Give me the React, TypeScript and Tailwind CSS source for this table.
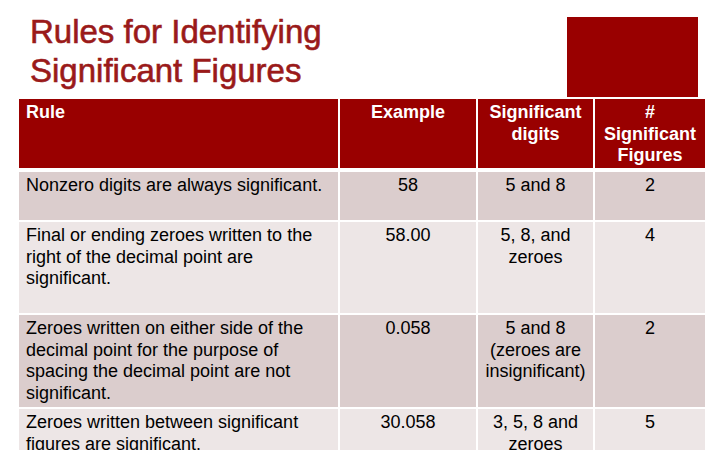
import React from "react";

const rows = [
    {
        rule: "Nonzero digits are always significant.",
        example: "58",
        digits: "5 and 8",
        count: "2",
        h: "h-[48px]",
        bg: "bg-[#dbcdcd]",
    },
    {
        rule: "Final or ending zeroes written to the right of the decimal point are significant.",
        example: "58.00",
        digits: "5, 8, and zeroes",
        count: "4",
        h: "h-[91px]",
        bg: "bg-[#ede6e6]",
    },
    {
        rule: "Zeroes written on either side of the decimal point for the purpose of spacing the decimal point are not significant.",
        example: "0.058",
        digits: "5 and 8 (zeroes are insignificant)",
        count: "2",
        h: "h-[92px]",
        bg: "bg-[#dbcdcd]",
    },
    {
        rule: "Zeroes written between significant figures are significant.",
        example: "30.058",
        digits: "3, 5, 8 and zeroes",
        count: "5",
        h: "h-[80px]",
        bg: "bg-[#ede6e6]",
    },
];

const App = () => {
    return (
        <div className="w-[720px] h-[450px] overflow-hidden bg-white font-['Liberation_Sans',Arial,sans-serif]">
            <div className="flex justify-between h-[99px]">
                <h1 className="pl-[30px] pt-[12px] text-[33px] leading-[39px] font-normal text-[#9a1a1a] [-webkit-text-stroke:0.6px_#9a1a1a]">
                    Rules for Identifying
                    <br />
                    Significant Figures
                </h1>
                <div className="mt-[17px] mr-[22px] w-[131px] h-[80px] bg-[#990000]" />
            </div>

            <div className="ml-[19px] w-[686px] text-[18px] leading-[21.5px]">
                <div className="grid grid-cols-[319px_136px_115px_110px] gap-x-[2px] h-[69px] text-white font-bold">
                    <div className="bg-[#990000] px-[7px] pt-[3px]">Rule</div>
                    <div className="bg-[#990000] px-[7px] pt-[3px] text-center">Example</div>
                    <div className="bg-[#990000] px-[7px] pt-[3px] text-center">Significant digits</div>
                    <div className="bg-[#990000] px-[5px] pt-[3px] text-center">
                        #
                        <br />
                        Significant Figures
                    </div>
                </div>

                <div className="flex flex-col gap-y-[2px] mt-[4px] text-black">
                    {rows.map((r) => (
                        <div key={r.example} className={`grid grid-cols-[319px_136px_115px_110px] gap-x-[2px] ${r.h}`}>
                            <div className={`${r.bg} px-[7px] pt-[3px]`}>{r.rule}</div>
                            <div className={`${r.bg} px-[7px] pt-[3px] text-center`}>{r.example}</div>
                            <div className={`${r.bg} px-[6px] pt-[3px] text-center`}>{r.digits}</div>
                            <div className={`${r.bg} px-[7px] pt-[3px] text-center`}>{r.count}</div>
                        </div>
                    ))}
                </div>
            </div>
        </div>
    );
};

export default App;
